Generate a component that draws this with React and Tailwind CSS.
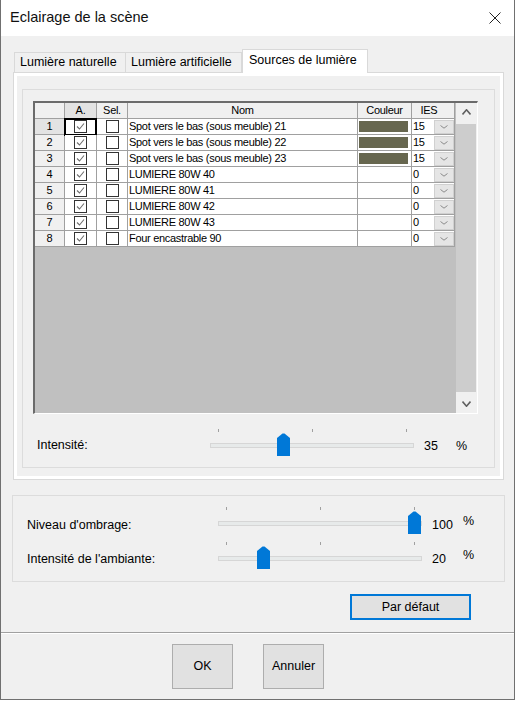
import React from 'react'

const lights = [
  { n: 1, name: 'Spot vers le bas (sous meuble) 21', swatch: true, ies: 15 },
  { n: 2, name: 'Spot vers le bas (sous meuble) 22', swatch: true, ies: 15 },
  { n: 3, name: 'Spot vers le bas (sous meuble) 23', swatch: true, ies: 15 },
  { n: 4, name: 'LUMIERE 80W 40', swatch: false, ies: 0 },
  { n: 5, name: 'LUMIERE 80W 41', swatch: false, ies: 0 },
  { n: 6, name: 'LUMIERE 80W 42', swatch: false, ies: 0 },
  { n: 7, name: 'LUMIERE 80W 43', swatch: false, ies: 0 },
  { n: 8, name: 'Four encastrable 90', swatch: false, ies: 0 },
]

const CheckBox = ({ checked }) => (
  <span className="flex h-[13px] w-[13px] items-center justify-center border border-[#333333] bg-white">
    {checked && (
      <svg width="11" height="11" viewBox="0 0 11 11">
        <path d="M2 5.5 L4.5 8 L9 2.5" fill="none" stroke="#6e6e6e" strokeWidth="1.1" />
      </svg>
    )}
  </span>
)

const Chevron = ({ up, color = '#6d6d6d', w = 9, h = 5, sw = 1 }) => (
  <svg width={w} height={h} viewBox={`0 0 ${w} ${h}`}>
    <path
      d={up ? `M0.5 ${h - 0.5} L${w / 2} 0.8 L${w - 0.5} ${h - 0.5}` : `M0.5 0.5 L${w / 2} ${h - 0.8} L${w - 0.5} 0.5`}
      fill="none"
      stroke={color}
      strokeWidth={sw}
    />
  </svg>
)

const Slider = ({ value }) => {
  const center = 8 + (value / 100) * 188
  return (
    <div className="relative h-[27px] w-[204px] shrink-0">
      <span className="absolute left-[8px] top-0 h-[3px] w-px bg-[#a0a0a0]" />
      <span className="absolute left-[102px] top-0 h-[3px] w-px bg-[#a0a0a0]" />
      <span className="absolute left-[196px] top-0 h-[3px] w-px bg-[#a0a0a0]" />
      <div className="absolute left-0 right-0 top-[14px] h-[5px] border border-[#d6d6d6] bg-[#e7eaea]" />
      <svg
        className="absolute top-[4px]"
        style={{ left: center - 6.5 }}
        width="13"
        height="23"
        viewBox="0 0 13 23"
      >
        <path d="M0 5 L5.5 0.5 H7.5 L13 5 V23 H0 Z" fill="#0078d7" />
      </svg>
    </div>
  )
}

const Grid = () => (
  <div className="ml-[10px] mt-[11px] flex h-[313px] w-[445px] border-l-2 border-t-2 border-r border-b border-l-[#6b6b6b] border-t-[#6b6b6b] border-r-white border-b-white text-[11px] tracking-[-0.3px] text-black">
    <div className="h-full w-[421px] bg-[#c0c0c0]">
      <div className="flex h-[16px] w-[420px] leading-[15px]">
        <div className="w-[30px] border-r border-b border-[#a0a0a0] bg-[#f0f0f0]" />
        <div className="w-[32px] border-r border-b border-[#a0a0a0] bg-[#e3e3e3] text-center">A.</div>
        <div className="w-[31px] border-r border-b border-[#a0a0a0] bg-[#f0f0f0] text-center">Sel.</div>
        <div className="w-[230px] border-r border-b border-[#a0a0a0] bg-[#f0f0f0] text-center">Nom</div>
        <div className="w-[54px] border-r border-b border-[#a0a0a0] bg-[#f0f0f0] text-center">Couleur</div>
        <div className="w-[43px] border-r border-b border-[#a0a0a0] bg-[#f0f0f0] pr-[8px] text-center">IES</div>
      </div>
      {lights.map((l) => (
        <div key={l.n} className="flex h-[16px] w-[420px] leading-[15px]">
          <div
            className={`w-[30px] border-r border-b border-[#a0a0a0] text-center ${
              l.n === 1 ? 'bg-[#e3e3e3]' : 'bg-[#f0f0f0]'
            }`}
          >
            {l.n}
          </div>
          <div className="relative flex w-[32px] items-center justify-center border-r border-b border-[#a0a0a0] bg-white">
            <CheckBox checked />
            {l.n === 1 && <span className="absolute -left-px -top-px h-[18px] w-[33px] border-2 border-black" />}
          </div>
          <div className="flex w-[31px] items-center justify-center border-r border-b border-[#a0a0a0] bg-white">
            <CheckBox />
          </div>
          <div className="w-[230px] truncate border-r border-b border-[#a0a0a0] bg-white pl-[1px]">{l.name}</div>
          <div className="flex w-[54px] items-center border-r border-b border-[#a0a0a0] bg-white pl-[1px]">
            {l.swatch && <span className="h-[11px] w-[49px] bg-[#67674f]" />}
          </div>
          <div className="flex w-[43px] items-center border-r border-b border-[#a0a0a0] bg-white pl-[1px]">
            <span className="flex-1">{l.ies}</span>
            <span className="flex h-[14px] w-[20px] items-center justify-center border border-[#d0d0d0] bg-[#e5e5e5]">
              <Chevron w={8} h={4} color="#8a8a8a" />
            </span>
          </div>
        </div>
      ))}
    </div>
    <div className="flex h-full w-[21px] flex-col bg-[#f0f0f0]">
      <div className="flex h-[21px] items-center justify-center pb-[3px]">
        <Chevron up w={9} h={6} color="#606060" sw={1.6} />
      </div>
      <div className="mr-[1px] h-[268px] bg-[#cdcdcd]" />
      <div className="flex h-[21px] items-center justify-center pt-[2px]">
        <Chevron w={9} h={6} color="#606060" sw={1.6} />
      </div>
    </div>
  </div>
)

const WinButton = ({ children, className, focused }) => (
  <button
    className={`flex items-center justify-center bg-[#e1e1e1] text-[12.5px] text-black ${
      focused ? 'border-2 border-[#0078d7]' : 'border border-[#adadad]'
    } ${className}`}
  >
    {children}
  </button>
)

export default function App() {
  return (
    <div className="h-[701px] w-[516px] bg-white font-['Liberation_Sans',Arial,sans-serif] text-[12.5px] text-black">
      <div className="flex h-[700px] w-[515px] flex-col border-x border-b border-[#707070]">
        <div className="flex h-[36px] shrink-0 items-center justify-between bg-white pl-[9px] pr-[13px]">
          <span className="text-[14.5px] text-[#111]">Eclairage de la scène</span>
          <svg width="12" height="12" viewBox="0 0 12 12">
            <path d="M0.5 0.5 L11.5 11.5 M11.5 0.5 L0.5 11.5" stroke="#222" strokeWidth="1" />
          </svg>
        </div>

        <div className="flex flex-1 flex-col bg-[#f0f0f0] pt-[13px]">
          <div className="flex h-[23px] items-end pl-[13px]">
            <div className="flex h-[20px] w-[112px] items-center border-x border-t border-[#d9d9d9] pl-[5px] text-[12.5px]">
              Lumière naturelle
            </div>
            <div className="flex h-[20px] w-[116px] items-center border-r border-t border-[#d9d9d9] pl-[5px] text-[12.5px]">
              Lumière artificielle
            </div>
            <div className="relative z-10 -mb-px flex h-[24px] w-[126px] items-center border-x border-t border-[#d9d9d9] bg-white pb-[2px] pl-[6px] text-[12.5px]">
              Sources de lumière
            </div>
          </div>

          <div className="ml-[12px] flex h-[408px] w-[491px] border border-[#d9d9d9]">
            <div className="flex flex-1 flex-col border-[3px] border-white bg-[#f0f0f0]">
              <div className="mx-[5px] mt-[13px] h-[379px] border border-[#dcdcdc]">
                <Grid />
                <div className="mt-[15px] flex">
                  <div className="w-[187px] pl-[14px] pt-[9px] leading-[15px]">Intensité:</div>
                  <Slider value={35} />
                  <div className="w-[42px] pl-[10px] pt-[10px] leading-[15px]">35</div>
                  <div className="pt-[10px] leading-[15px]">%</div>
                </div>
              </div>
            </div>
          </div>

          <div className="ml-[11px] mt-[15px] h-[87px] w-[493px] border border-[#dcdcdc] pt-[11px]">
            <div className="flex">
              <div className="w-[205px] pl-[14px] pt-[11px] leading-[15px]">Niveau d'ombrage:</div>
              <Slider value={100} />
              <div className="w-[41px] pl-[10px] pt-[11px] leading-[15px]">100</div>
              <div className="pt-[7px] leading-[15px]">%</div>
            </div>
            <div className="mt-[8px] flex">
              <div className="w-[205px] pl-[14px] pt-[10px] leading-[15px]">Intensité de l'ambiante:</div>
              <Slider value={20} />
              <div className="w-[41px] pl-[10px] pt-[10px] leading-[15px]">20</div>
              <div className="pt-[6px] leading-[15px]">%</div>
            </div>
          </div>

          <div className="mt-[12px] flex pl-[349px]">
            <WinButton focused className="h-[26px] w-[121px]">Par défaut</WinButton>
          </div>

          <div className="mt-[12px] h-[2px] border-t border-b border-t-[#a0a0a0] border-b-white" />

          <div className="mt-[10px] flex gap-[30px] pl-[171px]">
            <WinButton className="h-[45px] w-[61px]">OK</WinButton>
            <WinButton className="h-[45px] w-[61px]">Annuler</WinButton>
          </div>
        </div>
      </div>
    </div>
  )
}
